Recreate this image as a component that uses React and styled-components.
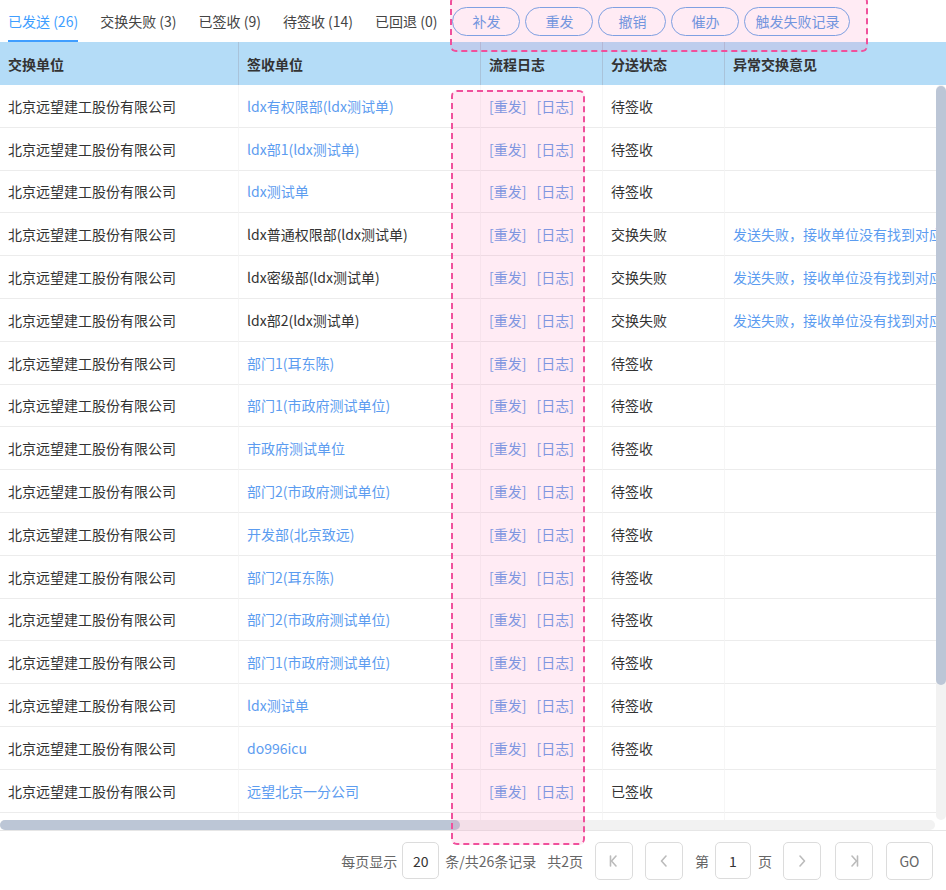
import React from "react";
import styled, { createGlobalStyle } from "styled-components";

const GlobalStyle = createGlobalStyle`
  html, body {
    margin: 0;
    padding: 0;
    background: #fff;
  }
  body {
    font-family: "Noto Sans CJK SC", "Liberation Sans", sans-serif;
    font-size: 14px;
    color: #333;
  }
  * { box-sizing: border-box; }
`;

const COLS = [239, 242, 122, 122, 1175];
const TABLE_W = COLS.reduce((a, b) => a + b, 0);

const tabs = [
  { label: "已发送 (26)", active: true },
  { label: "交换失败 (3)" },
  { label: "已签收 (9)" },
  { label: "待签收 (14)" },
  { label: "已回退 (0)" },
];

const actions = ["补发", "重发", "撤销", "催办", "触发失败记录"];

const FAIL = "发送失败，接收单位没有找到对应的交换账号，请联系管理员处理";

const rows = [
  { unit: "ldx有权限部(ldx测试单)", link: true, state: "待签收" },
  { unit: "ldx部1(ldx测试单)", link: true, state: "待签收" },
  { unit: "ldx测试单", link: true, state: "待签收" },
  { unit: "ldx普通权限部(ldx测试单)", state: "交换失败", note: FAIL },
  { unit: "ldx密级部(ldx测试单)", state: "交换失败", note: FAIL },
  { unit: "ldx部2(ldx测试单)", state: "交换失败", note: FAIL },
  { unit: "部门1(耳东陈)", link: true, state: "待签收" },
  { unit: "部门1(市政府测试单位)", link: true, state: "待签收" },
  { unit: "市政府测试单位", link: true, state: "待签收" },
  { unit: "部门2(市政府测试单位)", link: true, state: "待签收" },
  { unit: "开发部(北京致远)", link: true, state: "待签收" },
  { unit: "部门2(耳东陈)", link: true, state: "待签收" },
  { unit: "部门2(市政府测试单位)", link: true, state: "待签收" },
  { unit: "部门1(市政府测试单位)", link: true, state: "待签收" },
  { unit: "ldx测试单", link: true, state: "待签收" },
  { unit: "do996icu", link: true, state: "待签收" },
  { unit: "远望北京一分公司", link: true, state: "已签收" },
  { unit: "远望北京二分公司", link: true, state: "已签收" },
  { unit: "部门3(耳东陈)", link: true, state: "已签收" },
  { unit: "开发部(北京致远)", link: true, state: "待签收" },
];

const Page = styled.div`
  position: relative;
  width: 946px;
  height: 890px;
  display: flex;
  flex-direction: column;
  overflow: hidden;
`;

const TabBar = styled.div`
  height: 42px;
  display: flex;
  align-items: stretch;
  padding-left: 8px;
  flex-shrink: 0;
`;

const Tab = styled.div`
  position: relative;
  display: flex;
  align-items: center;
  margin-right: 22px;
  font-size: 14px;
  line-height: 20px;
  color: ${({ $active }) => ($active ? "#409eff" : "#444")};
  white-space: nowrap;
  cursor: pointer;
  &::after {
    content: "";
    display: ${({ $active }) => ($active ? "block" : "none")};
    position: absolute;
    left: 0;
    right: 0;
    bottom: 0;
    height: 2px;
    background: #409eff;
  }
`;

const ActionGroup = styled.div`
  display: flex;
  align-items: center;
  gap: 5px;
  margin-left: -7px;
`;

const PillButton = styled.button`
  height: 29px;
  min-width: 68px;
  padding: 0 10px;
  border: 1.5px solid #6aa8ea;
  border-radius: 15px;
  background: transparent;
  color: #5b9be6;
  font-family: inherit;
  font-size: 14px;
  line-height: 1;
  cursor: pointer;
`;

const HeaderWrap = styled.div`
  height: 43px;
  background: #b4dcf7;
  overflow: hidden;
  flex-shrink: 0;
`;

const Grid = styled.div`
  width: ${TABLE_W}px;
  display: grid;
  grid-template-columns: ${COLS.map((c) => c + "px").join(" ")};
`;

const HeadCell = styled.div`
  height: 43px;
  display: flex;
  align-items: center;
  padding: 0 8px;
  font-weight: 700;
  color: #333;
  border-right: 1px solid #a9c3da;
  &:last-child { border-right: none; }
`;

const BodyFrame = styled.div`
  height: 745px;
  display: flex;
  flex-direction: column;
  flex-shrink: 0;
`;

const BodyRow = styled.div`
  flex: 1;
  display: flex;
  min-height: 0;
`;

const Viewport = styled.div`
  flex: 1;
  overflow: hidden;
`;

const VTrack = styled.div`
  width: 10px;
  background: #f2f2f2;
  border-radius: 5px;
  padding-top: 1px;
`;

const VThumb = styled.div`
  height: 599px;
  background: #bcc6d6;
  border-radius: 5px;
`;

const HRow = styled.div`
  height: 10px;
  display: flex;
`;

const HTrack = styled.div`
  flex: 1;
  background: #f2f2f2;
  border-radius: 5px;
`;

const HThumb = styled.div`
  width: 460px;
  height: 100%;
  background: #bcc6d6;
  border-radius: 5px;
`;

const Corner = styled.div`
  width: 11px;
`;

const Cell = styled.div`
  height: 42.8px;
  display: flex;
  align-items: center;
  padding: 0 8px;
  white-space: nowrap;
  overflow: hidden;
  border-bottom: 1px solid #ececec;
  border-right: 1px solid #f6f6f6;
  color: ${({ $blue }) => ($blue ? "#5c9cf0" : "#333")};
`;

const LogLink = styled.span`
  color: #6b9de8;
  margin-right: 10px;
  cursor: pointer;
`;

const Pager = styled.div`
  flex: 1;
  display: flex;
  align-items: center;
  justify-content: flex-end;
  padding-right: 13px;
  border-top: 1px solid #e6e6e6;
  color: #666;
  font-size: 14px;
`;

const PagerText = styled.span`
  margin-left: ${({ $ml }) => $ml || 0}px;
  white-space: nowrap;
`;

const PagerBox = styled.div`
  width: ${({ $w }) => $w || 38}px;
  height: ${({ $h }) => $h || 38}px;
  border: 1px solid #dcdcdc;
  border-radius: 5px;
  display: flex;
  align-items: center;
  justify-content: center;
  color: ${({ $tone }) => $tone || "#333"};
  margin-left: ${({ $ml }) => $ml || 0}px;
  font-size: 14px;
  background: #fff;
`;

const Marker = styled.div`
  position: absolute;
  left: ${({ $x }) => $x}px;
  top: ${({ $y }) => $y}px;
  width: ${({ $w }) => $w}px;
  height: ${({ $h }) => $h}px;
  border: 2px dashed #f0509c;
  border-radius: 6px;
  background: rgba(255, 110, 180, 0.14);
  pointer-events: none;
`;

const Chevron = ({ dir = "left", bar }) => (
  <svg width="14" height="16" viewBox="0 0 14 16" fill="none" stroke="currentColor" strokeWidth="1.6" strokeLinecap="round" strokeLinejoin="round">
    {dir === "left" ? <path d="M9 3 L4.5 8 L9 13" /> : <path d="M5 3 L9.5 8 L5 13" />}
    {bar && (dir === "left" ? <path d="M3.5 3 V13" /> : <path d="M10.5 3 V13" />)}
  </svg>
);

export default function App() {
  return (
    <Page>
      <GlobalStyle />
      <TabBar>
        {tabs.map((t) => (
          <Tab key={t.label} $active={t.active}>{t.label}</Tab>
        ))}
        <ActionGroup>
          {actions.map((a) => (
            <PillButton key={a}>{a}</PillButton>
          ))}
        </ActionGroup>
      </TabBar>

      <HeaderWrap>
        <Grid>
          <HeadCell>交换单位</HeadCell>
          <HeadCell>签收单位</HeadCell>
          <HeadCell>流程日志</HeadCell>
          <HeadCell>分送状态</HeadCell>
          <HeadCell>异常交换意见</HeadCell>
        </Grid>
      </HeaderWrap>

      <BodyFrame>
        <BodyRow>
          <Viewport>
            <Grid>
              {rows.map((r, i) => (
                <React.Fragment key={i}>
                  <Cell>北京远望建工股份有限公司</Cell>
                  <Cell $blue={r.link}>{r.unit}</Cell>
                  <Cell>
                    <LogLink>[重发]</LogLink>
                    <LogLink>[日志]</LogLink>
                  </Cell>
                  <Cell>{r.state}</Cell>
                  <Cell $blue>{r.note || ""}</Cell>
                </React.Fragment>
              ))}
            </Grid>
          </Viewport>
          <VTrack>
            <VThumb />
          </VTrack>
        </BodyRow>
        <HRow>
          <HTrack>
            <HThumb />
          </HTrack>
          <Corner />
        </HRow>
      </BodyFrame>

      <Pager>
        <PagerText>每页显示</PagerText>
        <PagerBox $ml={5} $w={37} $h={37}>20</PagerBox>
        <PagerText $ml={6}>条/共26条记录</PagerText>
        <PagerText $ml={11}>共2页</PagerText>
        <PagerBox $ml={12} $tone="#bbb"><Chevron dir="left" bar /></PagerBox>
        <PagerBox $ml={12} $tone="#bbb"><Chevron dir="left" /></PagerBox>
        <PagerText $ml={12}>第</PagerText>
        <PagerBox $ml={6} $w={36} $h={37}>1</PagerBox>
        <PagerText $ml={7}>页</PagerText>
        <PagerBox $ml={11} $tone="#bbb"><Chevron dir="right" /></PagerBox>
        <PagerBox $ml={14} $tone="#bbb"><Chevron dir="right" bar /></PagerBox>
        <PagerBox $ml={13} $w={47} $tone="#666">GO</PagerBox>
      </Pager>

      <Marker $x={450} $y={-4} $w={418} $h={56} />
      <Marker $x={451} $y={90} $w={134} $h={755} />
    </Page>
  );
}
